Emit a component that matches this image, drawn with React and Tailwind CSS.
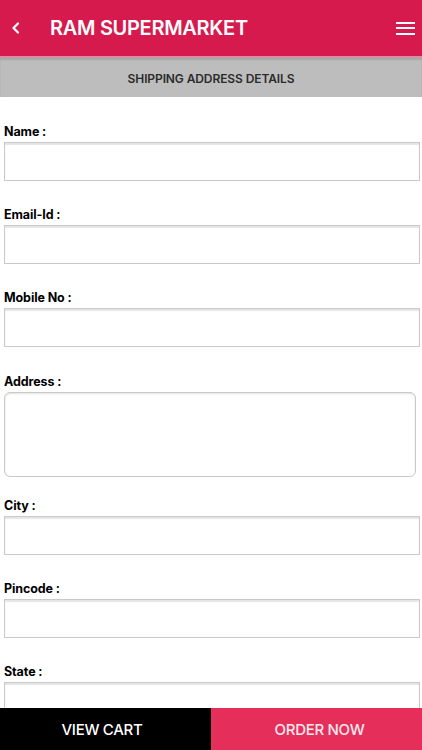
import React from "react";

const font = { fontFamily: "Inter, 'Open Sans', sans-serif" };

function Field({ label, tall = false, gap = "mt-[25px]" }) {
  return (
    <div className={gap}>
      <div className="h-4 text-[12.5px] leading-[17px] font-bold text-black tracking-[-0.1px]">{label}</div>
      {tall ? (
        <div className="mt-[3px] mr-[6px] h-[85px] rounded-[6px] border border-[#c9c9c9] bg-white shadow-[inset_0_1px_2px_rgba(0,0,0,0.12)]" />
      ) : (
        <div className="mt-[3px] mr-[2px] h-[39px] border border-[#c9c9c9] bg-white shadow-[inset_0_2px_1px_rgba(0,0,0,0.10)]" />
      )}
    </div>
  );
}

export default function App() {
  return (
    <div className="h-[750px] w-[422px] flex flex-col overflow-hidden bg-white" style={font}>
      {/* top app bar */}
      <div className="h-14 shrink-0 bg-[#d61a4d] flex items-center">
        <svg width="10" height="12" viewBox="0 0 10 12" className="ml-[11px]">
          <path d="M7 1.5 L2.5 6 L7 10.5" fill="none" stroke="white" strokeWidth="2.2" strokeLinecap="round" strokeLinejoin="round" />
        </svg>
        <div className="ml-[29px] text-[20px] leading-[26px] font-semibold text-white tracking-[-0.3px]">RAM SUPERMARKET</div>
        <div className="ml-auto mr-[7px] flex flex-col gap-[3.5px]">
          <span className="block h-[2px] w-[19px] bg-white" />
          <span className="block h-[2px] w-[19px] bg-white" />
          <span className="block h-[2px] w-[19px] bg-white" />
        </div>
      </div>
      <div className="h-[2px] shrink-0 bg-[#d98ea3]" />
      {/* section title */}
      <div className="h-[39px] shrink-0 bg-[#bdbdbd] flex items-center justify-center pt-[2px] shadow-[inset_0_2px_2px_rgba(0,0,0,0.12)]">
        <span className="text-[12px] font-semibold text-[#2b2b2b] tracking-[-0.1px]">SHIPPING ADDRESS DETAILS</span>
      </div>
      {/* form */}
      <div className="flex-1 overflow-hidden pl-1">
        <Field label="Name :" gap="mt-[26px]" />
        <Field label="Email-Id :" />
        <Field label="Mobile No :" />
        <Field label="Address :" gap="mt-[26px]" tall />
        <Field label="City :" gap="mt-[20px]" />
        <Field label="Pincode :" />
        <Field label="State :" />
      </div>
      {/* bottom actions */}
      <div className="h-[42px] shrink-0 flex">
        <button className="w-[211px] bg-black text-white text-[15px] font-medium tracking-[-0.3px] pr-[7px] pt-[3px]">VIEW CART</button>
        <button className="flex-1 bg-[#e52f5a] text-[#fde9ee] text-[15px] font-medium tracking-[-0.3px] pl-[6px] pt-[3px]">ORDER NOW</button>
      </div>
    </div>
  );
}
